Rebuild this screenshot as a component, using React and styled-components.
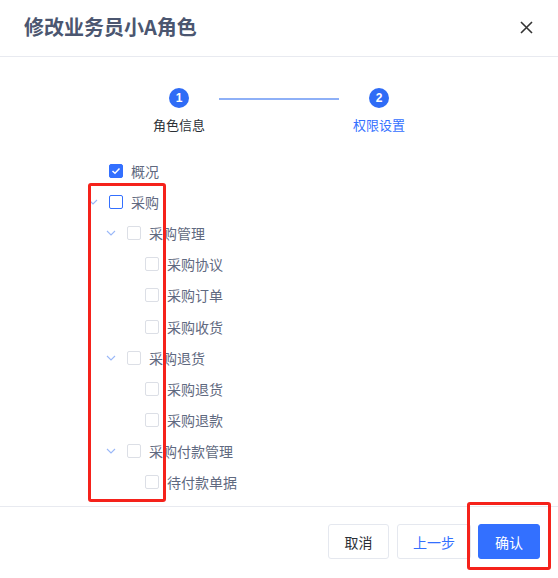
import React from "react";
import styled, { createGlobalStyle } from "styled-components";

const GlobalStyle = createGlobalStyle`
  html, body {
    margin: 0;
    padding: 0;
    background: #fff;
  }
  body {
    font-family: "Noto Sans CJK SC", "Noto Sans", sans-serif;
  }
  * {
    box-sizing: border-box;
  }
`;

const Dialog = styled.div`
  width: 558px;
  height: 578px;
  display: flex;
  flex-direction: column;
  background: #fff;
`;

const Header = styled.div`
  height: 57px;
  padding: 0 25px 2px 24px;
  display: flex;
  align-items: center;
  justify-content: space-between;
  border-bottom: 1px solid #e8eaf0;
`;

const Title = styled.h2`
  margin: 0;
  font-size: 20px;
  line-height: 28px;
  font-weight: 700;
  color: #4b5670;
`;

const CloseButton = styled.button`
  width: 14px;
  height: 14px;
  padding: 0;
  border: none;
  background: none;
  display: flex;
  align-items: center;
  justify-content: center;
  cursor: pointer;
`;

const Body = styled.div`
  flex: 1;
  display: flex;
  flex-direction: column;
  padding-top: 31px;
`;

const Steps = styled.div`
  display: flex;
  justify-content: center;
`;

const Step = styled.div`
  width: 80px;
  display: flex;
  flex-direction: column;
  align-items: center;
`;

const StepDot = styled.div`
  width: 20px;
  height: 20px;
  border-radius: 50%;
  background: #2f6cf6;
  color: #fff;
  font-family: "Liberation Sans", Arial, sans-serif;
  font-size: 12px;
  font-weight: 700;
  display: flex;
  align-items: center;
  justify-content: center;
`;

const StepLabel = styled.div`
  margin-top: 8px;
  font-size: 13px;
  line-height: 18px;
  color: ${(p) => (p.$active ? "#3370ff" : "#2b2f36")};
`;

const StepLine = styled.div`
  width: 120px;
  height: 2px;
  margin-top: 10px;
  background: #8eb0f7;
`;

const TreeWrap = styled.div`
  position: relative;
  margin-top: 21px;
  padding-left: 84px;
`;

const Row = styled.div`
  height: 31.2px;
  display: flex;
  align-items: center;
  padding-left: ${(p) => p.$level * 18}px;
`;

const Switcher = styled.span`
  width: 18px;
  height: 18px;
  display: flex;
  align-items: center;
  justify-content: center;
  margin-right: 7px;
`;

const Box = styled.span`
  width: 14px;
  height: 14px;
  border-radius: 2px;
  flex-shrink: 0;
  display: flex;
  align-items: center;
  justify-content: center;
  background: ${(p) => (p.$state === "checked" ? "#3370ff" : "#fff")};
  border: 1px solid
    ${(p) =>
      p.$state === "checked" || p.$state === "focus" ? "#3370ff" : "#dcdfe6"};
`;

const NodeText = styled.span`
  margin-left: 8px;
  font-size: 14px;
  line-height: 20px;
  color: #5f6980;
`;

const Annotation = styled.div`
  position: absolute;
  border: 3px solid #f5221b;
  border-radius: 3px;
  pointer-events: none;
`;

const TreeMark = styled(Annotation)`
  left: 88px;
  top: 28px;
  width: 78px;
  height: 319px;
`;

const Footer = styled.div`
  height: 72px;
  border-top: 1px solid #e8eaf0;
  display: flex;
  align-items: flex-start;
  justify-content: flex-end;
  gap: 7px;
  padding: 17px 18px 0 0;
`;

const Button = styled.button`
  height: 35px;
  width: ${(p) => p.$width}px;
  padding: 0;
  border-radius: 3px;
  font-family: inherit;
  font-size: 14px;
  cursor: pointer;
  border: 1px solid ${(p) => (p.$primary ? "#3370ff" : "#e5e8ef")};
  background: ${(p) => (p.$primary ? "#3370ff" : "#fff")};
  color: ${(p) => (p.$primary ? "#fff" : p.$link ? "#3370ff" : "#2b2f36")};
`;

const ConfirmWrap = styled.span`
  position: relative;
  display: inline-flex;
`;

const ConfirmMark = styled(Annotation)`
  left: -11px;
  right: -11px;
  top: -22px;
  bottom: -11px;
`;

const Chevron = () => (
  <svg width="10" height="6" viewBox="0 0 10 6" fill="none">
    <path d="M1 1l4 4 4-4" stroke="#9ab8f8" strokeWidth="1.1" />
  </svg>
);

const Check = () => (
  <svg width="10" height="8" viewBox="0 0 10 8" fill="none">
    <path d="M1.5 4l2.5 2.3L8.5 1.6" stroke="#fff" strokeWidth="1.5" />
  </svg>
);

const tree = [
  { label: "概况", level: 0, state: "checked" },
  { label: "采购", level: 0, state: "focus", open: true },
  { label: "采购管理", level: 1, open: true },
  { label: "采购协议", level: 2 },
  { label: "采购订单", level: 2 },
  { label: "采购收货", level: 2 },
  { label: "采购退货", level: 1, open: true },
  { label: "采购退货", level: 2 },
  { label: "采购退款", level: 2 },
  { label: "采购付款管理", level: 1, open: true },
  { label: "待付款单据", level: 2 },
];

function App() {
  return (
    <Dialog>
      <GlobalStyle />
      <Header>
        <Title>修改业务员小A角色</Title>
        <CloseButton aria-label="关闭">
          <svg width="13" height="13" viewBox="0 0 13 13">
            <path d="M1 1l11 11M12 1L1 12" stroke="#333" strokeWidth="1.6" />
          </svg>
        </CloseButton>
      </Header>
      <Body>
        <Steps>
          <Step>
            <StepDot>1</StepDot>
            <StepLabel>角色信息</StepLabel>
          </Step>
          <StepLine />
          <Step>
            <StepDot>2</StepDot>
            <StepLabel $active>权限设置</StepLabel>
          </Step>
        </Steps>
        <TreeWrap>
          {tree.map((node, i) => (
            <Row key={i} $level={node.level}>
              <Switcher>{node.open && <Chevron />}</Switcher>
              <Box $state={node.state}>
                {node.state === "checked" && <Check />}
              </Box>
              <NodeText>{node.label}</NodeText>
            </Row>
          ))}
          <TreeMark />
        </TreeWrap>
      </Body>
      <Footer>
        <Button $width={61} style={{ marginRight: 1 }}>
          取消
        </Button>
        <Button $width={74} $link>
          上一步
        </Button>
        <ConfirmWrap>
          <Button $width={62} $primary>
            确认
          </Button>
          <ConfirmMark />
        </ConfirmWrap>
      </Footer>
    </Dialog>
  );
}

export default App;
